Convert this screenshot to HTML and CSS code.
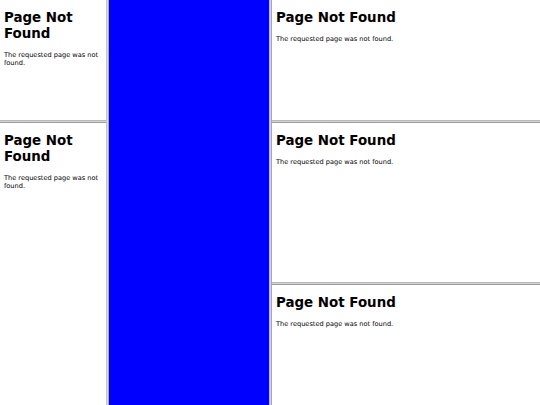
FILE: index.html
```html
<!DOCTYPE html>
<html>
<head>
<meta charset="utf-8">
<link rel="stylesheet" href="styles.css">
</head>
<body>
<div class="frameset">
  <div class="col col-left">
    <div class="frame frame-lt">
      <h1 class="title">Page Not Found</h1>
      <p class="msg">The requested page was not found.</p>
    </div>
    <div class="hborder"></div>
    <div class="frame frame-lb">
      <h1 class="title">Page Not Found</h1>
      <p class="msg">The requested page was not found.</p>
    </div>
  </div>
  <div class="vborder"></div>
  <div class="frame frame-blue"></div>
  <div class="vborder"></div>
  <div class="col col-right">
    <div class="frame frame-rt">
      <h1 class="title">Page Not Found</h1>
      <p class="msg">The requested page was not found.</p>
    </div>
    <div class="hborder"></div>
    <div class="frame frame-rm">
      <h1 class="title">Page Not Found</h1>
      <p class="msg">The requested page was not found.</p>
    </div>
    <div class="hborder"></div>
    <div class="frame frame-rb">
      <h1 class="title">Page Not Found</h1>
      <p class="msg">The requested page was not found.</p>
    </div>
  </div>
</div>
</body>
</html>
```
FILE: styles.css
```css
html, body {
  margin: 0;
  padding: 0;
  width: 540px;
  height: 405px;
  overflow: hidden;
  background: #ffffff;
}
.frameset {
  display: flex;
  width: 540px;
  height: 405px;
}
.col {
  display: flex;
  flex-direction: column;
  height: 405px;
}
.col-left { width: 106px; }
.col-right { width: 268px; }
.frame {
  background: #ffffff;
  padding: 10px 2px 0 4px;
  box-sizing: border-box;
  overflow: hidden;
  font-family: "DejaVu Sans", Verdana, sans-serif;
  color: #000;
}
.frame-lt { height: 120px; }
.frame-lb { flex: 1; }
.frame-rt { height: 120px; }
.frame-rm { height: 159px; }
.frame-rb { flex: 1; }
.frame-blue {
  width: 160px;
  height: 405px;
  background: #0000ff;
  padding: 0;
}
.vborder {
  width: 3px;
  height: 405px;
  box-sizing: border-box;
  background: #d8d8e4;
  border-left: 1px solid #c4c4d4;
  border-right: 1px solid #a4a4c0;
}
.hborder {
  height: 3px;
  box-sizing: border-box;
  background: #d4d4d4;
  border-top: 1px solid #b8b8b8;
  border-bottom: 1px solid #9c9c9c;
}
.title {
  margin: 0;
  font-size: 13.4px;
  line-height: 16px;
  font-weight: bold;
}
.msg {
  margin: 10px 0 0;
  font-size: 6.6px;
  line-height: 7.5px;
}
```
